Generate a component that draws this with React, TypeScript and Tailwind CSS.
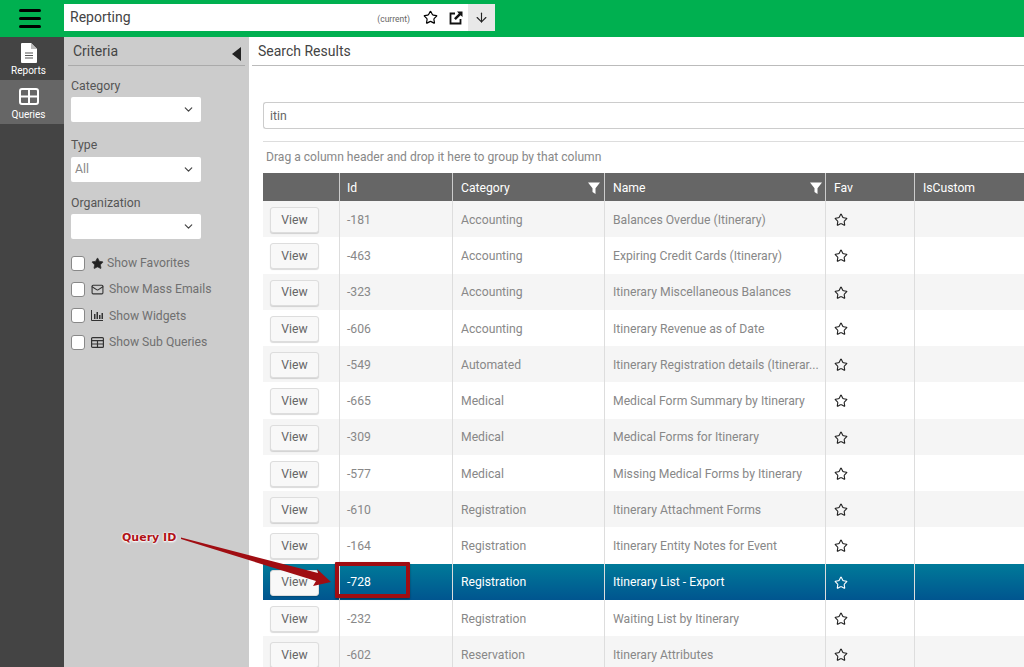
import React from 'react';
import { Star, ArrowDown, ChevronDown, Mail } from 'lucide-react';

const rows = [
  { id: '-181', category: 'Accounting', name: 'Balances Overdue (Itinerary)' },
  { id: '-463', category: 'Accounting', name: 'Expiring Credit Cards (Itinerary)' },
  { id: '-323', category: 'Accounting', name: 'Itinerary Miscellaneous Balances' },
  { id: '-606', category: 'Accounting', name: 'Itinerary Revenue as of Date' },
  { id: '-549', category: 'Automated', name: 'Itinerary Registration details (Itinerar...' },
  { id: '-665', category: 'Medical', name: 'Medical Form Summary by Itinerary' },
  { id: '-309', category: 'Medical', name: 'Medical Forms for Itinerary' },
  { id: '-577', category: 'Medical', name: 'Missing Medical Forms by Itinerary' },
  { id: '-610', category: 'Registration', name: 'Itinerary Attachment Forms' },
  { id: '-164', category: 'Registration', name: 'Itinerary Entity Notes for Event' },
  { id: '-728', category: 'Registration', name: 'Itinerary List - Export', selected: true },
  { id: '-232', category: 'Registration', name: 'Waiting List by Itinerary' },
  { id: '-602', category: 'Reservation', name: 'Itinerary Attributes' },
];

const Filter = () => (
  <svg width="12" height="12" viewBox="0 0 12 12" className="shrink-0">
    <path d="M0 0.5h12L7.5 6.2V12L4.5 10V6.2z" fill="#fff" />
  </svg>
);

const SelectBox = ({ value }: { value?: string }) => (
  <div className="mt-[3px] flex h-[25px] w-[130px] items-center justify-between rounded-[2px] bg-white pl-1 pr-1.5 text-[12.3px] text-[#888]">
    <span>{value}</span>
    <ChevronDown size={13} strokeWidth={2.2} className="text-[#444]" />
  </div>
);

const Check = ({ icon, label, gap }: { icon: React.ReactNode; label: string; gap: string }) => (
  <div className="flex h-[26.4px] items-center text-[12.2px] text-[#707070]">
    <span className="mr-[5px] h-[15px] w-[14px] rounded-[3px] border border-[#888] bg-white" />
    <span className="flex w-[14px] justify-center text-[#333]">{icon}</span>
    <span className={gap}>{label}</span>
  </div>
);

const cell = 'flex h-full shrink-0 items-center border-r border-[#ddd] pt-[2px]';

export default function App() {
  return (
    <div className="relative h-[667px] w-[1024px] overflow-hidden bg-white font-['Roboto',sans-serif]">
      {/* Top bar */}
      <div className="flex h-[37px] bg-[#00b050]">
        <div className="flex w-[64px] items-center justify-center pr-[4px]">
          <div className="flex w-[22px] flex-col gap-[5px]">
            <span className="h-[3px] rounded-full bg-black" />
            <span className="h-[3px] rounded-full bg-black" />
            <span className="h-[3px] rounded-full bg-black" />
          </div>
        </div>
        <div className="mt-[4px] flex h-[27px] w-[431px] items-center bg-white pl-[6px]">
          <span className="text-[14px] text-[#444]">Reporting</span>
          <span className="ml-auto mr-[13px] mt-1 text-[8.5px] text-[#666]">(current)</span>
          <Star size={15} strokeWidth={1.9} className="mr-[11px] text-black" />
          <svg width="14" height="14" viewBox="0 0 14 14" className="mr-[5px]">
            <path d="M6 2.5H1.5v10h10V8" fill="none" stroke="#111" strokeWidth="1.8" />
            <path d="M8 0.5h5.5V6L11.6 4.2 6.8 9 5 7.2 9.8 2.4z" fill="#111" />
          </svg>
          <span className="flex h-full w-[27px] items-center justify-center bg-[#e8e8e8]">
            <ArrowDown size={15} strokeWidth={1.8} className="text-[#222]" />
          </span>
        </div>
      </div>

      <div className="flex h-[630px]">
        {/* Icon rail */}
        <div className="w-[64px] shrink-0 bg-[#444]">
          <div className="flex h-[43px] flex-col items-center pr-[7px] pt-[6px] text-[10px] leading-[12px] text-white">
            <svg width="16" height="20" viewBox="0 0 16 20" className="mb-[2px]">
              <path d="M1 0h9l6 6v13a1 1 0 0 1-1 1H1a1 1 0 0 1-1-1V1a1 1 0 0 1 1-1z" fill="#fff" />
              <path d="M4 10h8M4 12.5h8M4 15h8" stroke="#555" strokeWidth="1.2" />
              <path d="M10 0v6h6" fill="#bbb" />
            </svg>
            <span>Reports</span>
          </div>
          <div className="flex h-[44px] flex-col items-center bg-[#666] pr-[7px] pt-[8px] text-[10px] leading-[12px] text-white">
            <svg width="20" height="17" viewBox="0 0 20 17" className="mb-[4px]">
              <rect x="1" y="1" width="18" height="15" rx="2" fill="none" stroke="#fff" strokeWidth="2" />
              <path d="M1 8.5h18M10 1v15" stroke="#fff" strokeWidth="2" />
            </svg>
            <span>Queries</span>
          </div>
        </div>

        {/* Criteria panel */}
        <div className="w-[185px] shrink-0 bg-[#ccc] px-[4px]">
          <div className="flex h-[29px] items-center justify-between border-b border-[#aaa] pl-[5px] pr-[4px]">
            <span className="text-[14px] text-[#444]">Criteria</span>
            <svg width="9" height="14" viewBox="0 0 9 14" className="mt-[6px]">
              <path d="M9 0v14L0 7z" fill="#222" />
            </svg>
          </div>
          <div className="px-[3px]">
            <div className="mt-[13px] text-[12.3px] leading-[15px] text-[#555]">Category</div>
            <SelectBox />
            <div className="mt-[15px] text-[12.3px] leading-[17px] text-[#555]">Type</div>
            <SelectBox value="All" />
            <div className="mt-[14px] text-[12.3px] leading-[15px] text-[#555]">Organization</div>
            <SelectBox />
            <div className="mt-[11px]">
              <Check icon={<Star size={13} fill="#222" strokeWidth={1.5} />} label="Show Favorites" gap="ml-[3px]" />
              <Check icon={<Mail size={13} strokeWidth={2} />} label="Show Mass Emails" gap="ml-[5px]" />
              <Check
                icon={
                  <svg width="12" height="11" viewBox="0 0 12 11">
                    <path d="M0.5 0v10.5H12" fill="none" stroke="#333" />
                    <path d="M3 4h1.5v5H3zM5.5 2H7v7H5.5zM8 5h1.5v4H8zM10.5 3H12v6h-1.5z" fill="#333" />
                  </svg>
                }
                label="Show Widgets"
                gap="ml-[5px]"
              />
              <Check
                icon={
                  <svg width="13" height="11" viewBox="0 0 13 11">
                    <rect x="0.6" y="0.6" width="11.8" height="9.8" rx="1" fill="none" stroke="#333" strokeWidth="1.2" />
                    <path d="M0.6 3.6h11.8M0.6 7h11.8M6.5 3.6v6.8" stroke="#333" strokeWidth="1.2" />
                  </svg>
                }
                label="Show Sub Queries"
                gap="ml-[5px]"
              />
            </div>
          </div>
        </div>

        {/* Results */}
        <div className="min-w-0 flex-1">
          <div className="ml-[3px] flex h-[29px] items-center border-b border-[#bbb] pl-[6px] text-[14px] text-[#444]">
            Search Results
          </div>
          <div className="pl-[14px]">
            <div className="mt-[36px] flex h-[27px] items-center rounded-l-[3px] border border-r-0 border-[#ccc] pl-[6px] pt-px text-[12.2px] text-[#666]">
              itin
            </div>
            <div className="mt-[12px] flex h-[32px] items-center border-t border-[#ddd] pl-[3px] text-[12.1px] text-[#888]">
              Drag a column header and drop it here to group by that column
            </div>
            <div className="flex h-[28px] items-center bg-[#666] text-[12.2px] text-white">
              <div className="h-full w-[77px] shrink-0 border-r border-[#ccc]" />
              <div className="flex h-full w-[113px] shrink-0 items-center border-r border-[#ccc] pl-[7px] pt-[2px]">Id</div>
              <div className="flex h-full w-[152px] shrink-0 items-center justify-between border-r border-[#ccc] pl-2 pr-[4px] pt-[2px]">
                Category <Filter />
              </div>
              <div className="flex h-full w-[221px] shrink-0 items-center justify-between border-r border-[#ccc] pl-2 pr-[3px] pt-[2px]">
                Name <Filter />
              </div>
              <div className="flex h-full w-[89px] shrink-0 items-center border-r border-[#ccc] pl-2 pt-[2px]">Fav</div>
              <div className="pl-2 pt-[2px]">IsCustom</div>
            </div>
            {rows.map((r, i) => (
              <div
                key={r.id}
                className={`flex h-[36.25px] items-center text-[12.2px] ${
                  r.selected
                    ? 'bg-gradient-to-b from-[#007a99] to-[#00558f] text-white'
                    : i % 2 === 0
                      ? 'bg-[#f5f5f5] text-[#888]'
                      : 'bg-white text-[#888]'
                }`}
              >
                <div className={`${cell} w-[77px] pl-[7px]`}>
                  <button className="flex h-[26px] w-[49px] items-center justify-center rounded-[3px] border border-[#ddd] bg-[#f8f8f8] text-[12.2px] text-[#666] shadow-[0_1px_1px_rgba(0,0,0,0.15)]">
                    View
                  </button>
                </div>
                <div className={`${cell} w-[113px] pl-[7px]`}>{r.id}</div>
                <div className={`${cell} w-[152px] pl-2`}>{r.category}</div>
                <div className={`${cell} w-[221px] whitespace-nowrap pl-2`}>{r.name}</div>
                <div className={`${cell} w-[89px] pl-2`}>
                  <Star size={14} strokeWidth={1.9} className={r.selected ? 'text-white' : 'text-[#222]'} />
                </div>
                <div className="flex-1" />
              </div>
            ))}
          </div>
        </div>
      </div>

      {/* Annotation over the grid */}
      <div className="absolute left-[335px] top-[562px] h-[36px] w-[75px] rounded-[1px] border-4 border-[#a00d12] shadow-[0_1px_2px_rgba(0,0,0,0.4)]" />
      <svg className="absolute left-0 top-0" width="1024" height="667" viewBox="0 0 1024 667">
        <path d="M181 537.5 L318 573 L317 569 L331 582 L313 586 L316 581 L181 539 Z" fill="#a00d12" />
      </svg>
      <span className="absolute left-[122px] top-[530px] text-[11px] font-bold leading-[15px] text-[#b01217] [text-shadow:0_0_2px_#fff,0_0_2px_#fff,0_1px_2px_#fff] font-['DejaVu_Sans',sans-serif]">
        Query ID
      </span>
    </div>
  );
}
